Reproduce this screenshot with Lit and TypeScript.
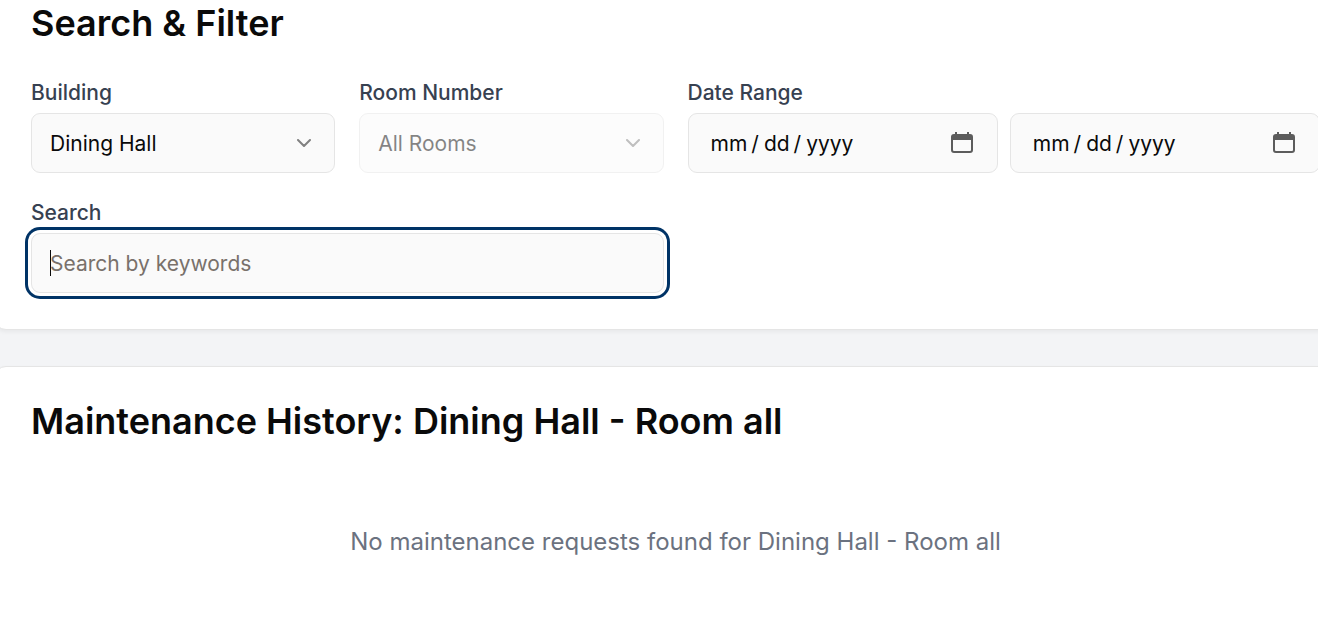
import { LitElement, html, css, svg } from "lit";
import { customElement, property, state } from "lit/decorators.js";

@customElement("panel-card")
class PanelCard extends LitElement {
  @property() heading = "";

  static styles = css`
    :host {
      display: block;
      box-sizing: border-box;
      padding: 36px;
      border: 1px solid #e5e5e5;
      border-radius: 12px;
      background: #ffffff;
      box-shadow: 0 2px 4px rgba(0, 0, 0, 0.05);
    }
    h2 {
      margin: 0 0 36px;
      font-size: 36px;
      line-height: 36px;
      font-weight: 600;
      color: #0a0a0a;
    }
  `;

  render() {
    return html`<h2>${this.heading}</h2><slot></slot>`;
  }
}

@customElement("app-root")
class AppRoot extends LitElement {
  @state() private building = "Dining Hall";
  @state() private room = "all";

  static styles = css`
    :host {
      display: block;
      box-sizing: border-box;
      height: 100vh;
      overflow: hidden;
      background: #f3f4f6;
      font-family: Inter, "Liberation Sans", sans-serif;
      color: #0a0a0a;
    }
    .page {
      display: flex;
      flex-direction: column;
      gap: 36px;
      margin: -32px -39px 0 -6px;
    }
    .filters {
      display: grid;
      grid-template-columns: repeat(4, minmax(0, 1fr));
      gap: 24px;
    }
    .field {
      display: flex;
      flex-direction: column;
      gap: 4px;
      min-width: 0;
      margin: 0;
      padding: 0;
      border: 0;
    }
    .wide {
      grid-column: span 2;
    }
    .label {
      font-size: 21px;
      line-height: 32px;
      font-weight: 500;
      color: #374151;
    }
    .control {
      box-sizing: border-box;
      width: 100%;
      min-width: 0;
      height: 60px;
      margin: 0;
      padding: 2px 18px 0;
      border: 1px solid #e5e5e5;
      border-radius: 9px;
      outline: none;
      background: #fafafa;
      color: #0a0a0a;
      font-family: inherit;
      font-size: 21px;
      line-height: 30px;
      appearance: none;
    }
    .search {
      padding: 0 18px;
    }
    .search:focus {
      box-shadow: 0 0 0 3px #ffffff, 0 0 0 6px #003366;
    }
    /* Steady insertion mark while the box is focused and still empty. */
    .search:focus:placeholder-shown {
      caret-color: transparent;
      background: linear-gradient(#0a0a0a, #0a0a0a) 18px center / 1px 26px no-repeat #fafafa;
    }
    .search::placeholder {
      color: #79716b;
      opacity: 1;
    }
    .picker {
      display: grid;
      align-items: center;
    }
    .picker > * {
      grid-area: 1 / 1;
    }
    .picker.off {
      opacity: 0.5;
    }
    .picker .control:disabled {
      opacity: 1;
    }
    .chevron {
      justify-self: end;
      width: 24px;
      height: 24px;
      margin-right: 19px;
      opacity: 0.5;
      pointer-events: none;
    }
    .dates {
      display: grid;
      grid-template-columns: 1fr 1fr;
      gap: 12px;
    }
    .date {
      padding: 2px 20px 0 21px;
    }
    .date::-webkit-datetime-edit-text {
      padding: 0 4px 0 3px;
    }
    .date::-webkit-calendar-picker-indicator {
      width: 30px;
      height: 30px;
      padding: 0;
      background: url("data:image/svg+xml,%3Csvg xmlns='http://www.w3.org/2000/svg' viewBox='0 0 30 30'%3E%3Cpath fill='%235c5c5c' fill-rule='evenodd' d='M8 3h2v2h10V3h2v2h1a3 3 0 0 1 3 3v13a3 3 0 0 1-3 3H7a3 3 0 0 1-3-3V8a3 3 0 0 1 3-3h1zM6 11v10q0 1 1 1h16q1 0 1-1V11z'/%3E%3C/svg%3E") center / 30px 30px no-repeat;
    }
    .empty {
      margin: 0;
      padding: 49px 0 47px;
      text-align: center;
      font-size: 24px;
      line-height: 36px;
      color: #6b7280;
    }
  `;

  async firstUpdated() {
    const card = this.renderRoot.querySelector<PanelCard>("panel-card");
    await card?.updateComplete;
    this.renderRoot.querySelector<HTMLInputElement>("#search")?.focus();
  }

  private chevron() {
    return html`<svg class="chevron" viewBox="0 0 24 24" fill="none" stroke="currentColor"
      stroke-width="2" stroke-linecap="round" stroke-linejoin="round" aria-hidden="true">
      ${svg`<path d="m6 9 6 6 6-6"></path>`}
    </svg>`;
  }

  render() {
    const place = `${this.building} - Room ${this.room}`;
    return html`
      <main class="page">
        <panel-card heading="Search &amp; Filter">
          <form class="filters" @submit=${(e: Event) => e.preventDefault()}>
            <div class="field">
              <label class="label" for="building">Building</label>
              <div class="picker">
                <select class="control" id="building"
                  @change=${(e: Event) => (this.building = (e.target as HTMLSelectElement).value)}>
                  <option>Dining Hall</option>
                </select>
                ${this.chevron()}
              </div>
            </div>
            <div class="field">
              <label class="label" for="room">Room Number</label>
              <div class="picker off">
                <select class="control" id="room" disabled>
                  <option value="all">All Rooms</option>
                </select>
                ${this.chevron()}
              </div>
            </div>
            <div class="field wide" role="group" aria-labelledby="range">
              <label class="label" id="range" for="from">Date Range</label>
              <div class="dates">
                <input class="control date" id="from" type="date" aria-label="Start date" />
                <input class="control date" id="to" type="date" aria-label="End date" />
              </div>
            </div>
            <div class="field wide">
              <label class="label" for="search">Search</label>
              <input class="control search" id="search" type="text" placeholder="Search by keywords" />
            </div>
          </form>
        </panel-card>
        <panel-card heading="Maintenance History: ${place}">
          <p class="empty">No maintenance requests found for ${place}</p>
        </panel-card>
      </main>
    `;
  }
}
